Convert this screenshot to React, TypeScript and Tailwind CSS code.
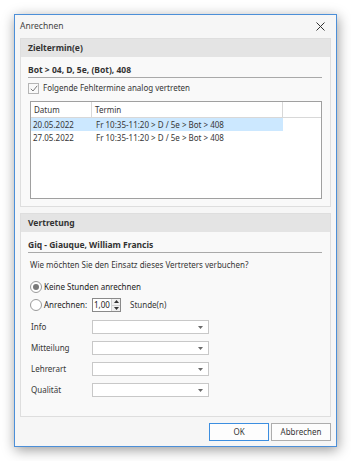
import React from "react";

const font = { fontFamily: '"Noto Sans", "Open Sans", sans-serif' };

function Combo() {
  return (
    <div className="w-[117px] h-[14px] border border-[#c8c8c8] bg-white flex items-center justify-end pr-[5px]">
      <svg width="5" height="3" viewBox="0 0 5 3"><path d="M0 0 L5 0 L2.5 3 Z" fill="#6a6a6a" /></svg>
    </div>
  );
}

function GroupHeader({ title }: { title: string }) {
  return (
    <div className="h-[18px] bg-[#e4e4e4] flex items-center pl-[7px] font-bold text-[8.5px] text-[#333]">
      {title}
    </div>
  );
}

export default function App() {
  return (
    <div className="w-[351px] h-[461px] bg-white pt-[14px] pl-[14px] text-[#363636] text-[8px] leading-none" style={font}>
      <div className="w-[323px] h-[433px] border border-[#4c8fd8] bg-[#f6f6f6] shadow-[1px_3px_12px_rgba(0,0,0,0.4)] flex flex-col">
        <div className="h-[23px] flex items-center justify-between pl-[5px] pr-[11px] shrink-0">
          <span className="text-[8.5px] text-[#444]">Anrechnen</span>
          <svg width="9" height="9" viewBox="0 0 9 9"><path d="M0.5 0.5 L8.5 8.5 M8.5 0.5 L0.5 8.5" stroke="#333" strokeWidth="1" /></svg>
        </div>
        <div className="px-[5px] flex flex-col">
          {/* Group 1 */}
          <div className="h-[169px] border border-[#dedede] bg-[#f9f9f9] flex flex-col">
            <GroupHeader title="Zieltermin(e)" />
            <div className="pl-[7px] pr-[8px] flex flex-col">
              <div className="mt-[7px] h-[14px] border-b border-[#a9a9a9] flex items-center font-bold text-[8.5px] text-[#333]">
                Bot &gt; 04, D, 5e, (Bot), 408
              </div>
              <div className="mt-[4px] h-[12px] flex items-center gap-[4px]">
                <div className="w-[11px] h-[11px] border border-[#b5b5b5] bg-[#f9f9f9] flex items-center justify-center">
                  <svg width="8" height="7" viewBox="0 0 8 7"><path d="M0.8 3.8 L3 6 L7.2 0.8" stroke="#7a7a7a" strokeWidth="1" fill="none" /></svg>
                </div>
                <span>Folgende Fehltermine analog vertreten</span>
              </div>
              <div className="mt-[7px] ml-[2px] h-[98px] border border-[#a0a0a0] bg-white flex flex-col">
                <div className="h-[16px] flex border-b border-[#d8d8d8] shrink-0">
                  <div className="w-[61px] border-r border-[#d8d8d8] flex items-center pl-[3px]">Datum</div>
                  <div className="w-[191px] border-r border-[#d8d8d8] flex items-center pl-[3px]">Termin</div>
                  <div className="flex-1" />
                </div>
                <div className="h-[13px] w-[252px] bg-[#cce8ff] flex items-center">
                  <div className="w-[62px] pl-[2px]">20.05.2022</div>
                  <div className="pl-[3px]">Fr 10:35-11:20 &gt; D / 5e &gt; Bot &gt; 408</div>
                </div>
                <div className="h-[13px] w-[252px] flex items-center">
                  <div className="w-[62px] pl-[2px]">27.05.2022</div>
                  <div className="pl-[3px]">Fr 10:35-11:20 &gt; D / 5e &gt; Bot &gt; 408</div>
                </div>
              </div>
            </div>
          </div>
          {/* Group 2 */}
          <div className="mt-[6px] h-[204px] border border-[#dedede] bg-[#f9f9f9] flex flex-col">
            <GroupHeader title="Vertretung" />
            <div className="pl-[7px] pr-[8px] flex flex-col">
              <div className="mt-[7px] h-[14px] border-b border-[#a9a9a9] flex items-center font-bold text-[8.5px] text-[#333]">
                Giq - Giauque, William Francis
              </div>
              <div className="mt-[6px] h-[12px] flex items-center pl-[2px]">
                Wie möchten Sie den Einsatz dieses Vertreters verbuchen?
              </div>
              <div className="mt-[10px] h-[12px] flex items-center gap-[2px] pl-[2px]">
                <div className="w-[12px] h-[12px] rounded-full border border-[#9a9a9a] bg-white flex items-center justify-center">
                  <div className="w-[6px] h-[6px] rounded-full bg-[#7a7a7a]" />
                </div>
                <span className="text-[#222]">Keine Stunden anrechnen</span>
              </div>
              <div className="mt-[5px] h-[14px] flex items-center pl-[2px]">
                <div className="w-[12px] h-[12px] rounded-full border border-[#9a9a9a] bg-white" />
                <span className="ml-[2px] w-[48px] text-[#222]">Anrechnen:</span>
                <div className="w-[29px] h-[14px] border border-[#8a8a8a] bg-white flex items-stretch">
                  <div className="flex-1 flex items-center pl-[1px] text-[#222]">1,00</div>
                  <div className="w-[9px] flex flex-col border-l border-[#d0d0d0]">
                    <div className="flex-1 flex items-center justify-center bg-[#f0f0f0] border-b border-[#d0d0d0]">
                      <svg width="5" height="3" viewBox="0 0 5 3"><path d="M0 3 L5 3 L2.5 0 Z" fill="#333" /></svg>
                    </div>
                    <div className="flex-1 flex items-center justify-center bg-[#f0f0f0]">
                      <svg width="5" height="3" viewBox="0 0 5 3"><path d="M0 0 L5 0 L2.5 3 Z" fill="#333" /></svg>
                    </div>
                  </div>
                </div>
                <span className="ml-[9px]">Stunde(n)</span>
              </div>
              <div className="mt-[8px] flex flex-col gap-[7px] pl-[3px]">
                {["Info", "Mitteilung", "Lehrerart", "Qualität"].map((l) => (
                  <div key={l} className="h-[14px] flex items-center">
                    <span className="w-[61px]">{l}</span>
                    <Combo />
                  </div>
                ))}
              </div>
            </div>
          </div>
          <div className="mt-[6px] flex justify-end gap-[2px]">
            <div className="w-[60px] h-[18px] border border-[#3c8ee0] bg-[#fdfdfd] flex items-center justify-center">OK</div>
            <div className="w-[60px] h-[18px] border border-[#adadad] bg-[#fdfdfd] flex items-center justify-center">Abbrechen</div>
          </div>
        </div>
      </div>
    </div>
  );
}
